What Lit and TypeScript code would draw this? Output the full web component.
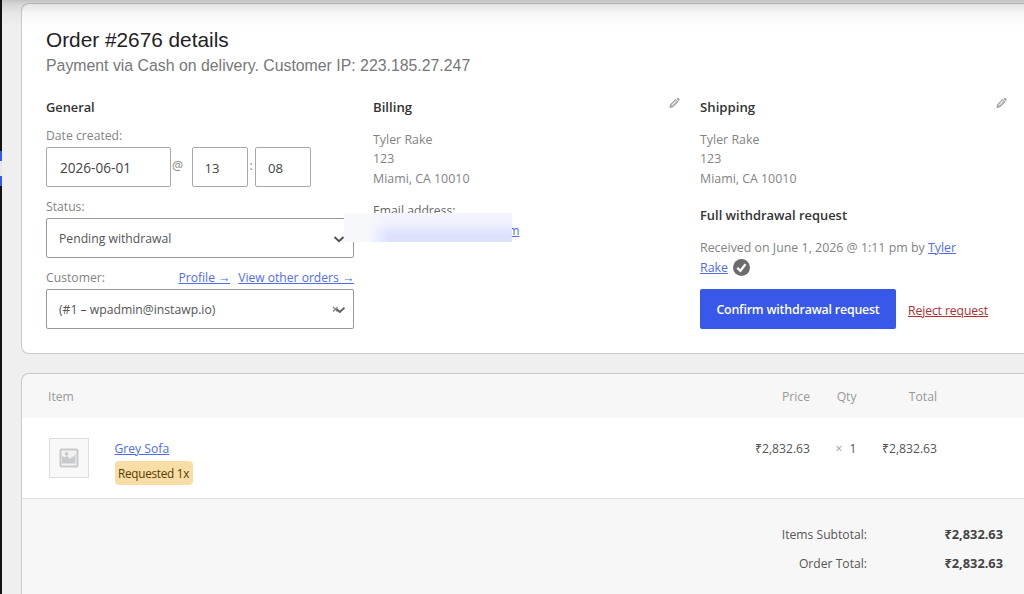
import { LitElement, html, css } from "lit";
import { customElement, property } from "lit/decorators.js";

const base = css`
  :host { display: block; }
  * { box-sizing: border-box; margin: 0; }
  a { color: #3858e9; opacity: .88; text-decoration: underline; text-underline-offset: 1px; text-decoration-thickness: 1px; }
  h3 { font-size: 13.2px; line-height: 20px; font-weight: 600; color: #333; }
`;

@customElement("address-block")
class AddressBlock extends LitElement {
  @property() heading = "";
  static styles = [base, css`
    .head { display: flex; justify-content: space-between; align-items: flex-start; height: 20px; }
    .pencil { width: 12px; height: 12px; }
    .lines { margin-top: 13px; font-size: 12.4px; line-height: 19.4px; color: #838383; }
  `];
  render() {
    return html`
      <div class="head"><h3>${this.heading}</h3>
        <svg class="pencil" viewBox="0 0 12 12">
          <path d="M.8 10.6 L1.6 7.3 L6.6 2.3 L9.1 4.8 L4.1 9.8 Z" fill="#b4b4b4" stroke="#969696" stroke-width=".8"/>
          <path d="M7.4 1.6 Q8.8 .3 10.2 1.5 Q11.4 2.8 9.9 4.1 Z" fill="#999"/>
          <path d="M2.9 8.2 L7.2 3.9" stroke="#f2f2f2" stroke-width="1.1"/>
        </svg>
      </div>
      <div class="lines">Tyler Rake<br>123<br>Miami, CA 10010</div>`;
  }
}

@customElement("order-items")
class OrderItems extends LitElement {
  static styles = [base, css`
    :host { font-size: 12.15px; color: #555; }
    .row { display: grid; grid-template-columns: 66.5px 1fr 100px 46.5px 80.5px 87px; padding-left: 26px; }
    .head { height: 44px; line-height: 46px; color: #999; }
    .head .first { grid-column: 1 / 3; }
    .num { text-align: right; }
    .body { background: #fff; height: 81px; padding-top: 20px; border-bottom: 1px solid #dedede; line-height: 21px; }
    .thumb { width: 40px; height: 40px; margin-left: .5px; border: 1px solid #dfdfdf; background: #f8f8f8; display: grid; place-items: center; }
    .thumb svg { width: 20px; height: 20px; }
    .badge { display: block; width: 78px; height: 24px; line-height: 25px; margin-top: 2px; border-radius: 4px; background: #f8dda7; color: #573b00; text-align: center; font-size: 11.8px; letter-spacing: -.3px; white-space: nowrap; }
    .x { color: #999; font-size: 12px; margin-right: 4px; }
    .totals { padding: 21px 21px 0 0; }
    .total { display: grid; grid-template-columns: 1fr 136px; text-align: right; line-height: 29px; }
    .total b { font-weight: 700; color: #444; font-size: 12.8px; }
  `];
  render() {
    return html`
      <div class="row head"><span class="first">Item</span><span class="num">Price</span><span class="num">Qty</span><span class="num">Total</span></div>
      <div class="row body">
        <div class="thumb"><svg viewBox="0 0 20 20">
          <rect x="1.5" y="1.5" width="17" height="17" rx="1" fill="#f2f2f2" stroke="#c9cacc" stroke-width="2"/>
          <path d="M3 14 V7.5 L5 9.5 L8 8 L11 11 L13 8.5 L15 9 L16.5 5 V15.5 H3 Z" fill="#c9cacc"/>
          <circle cx="7.6" cy="5.8" r="1.9" fill="#c9cacc"/>
        </svg></div>
        <div><a>Grey Sofa</a><span class="badge">Requested 1x</span></div>
        <span class="num">₹2,832.63</span><span class="num"><span class="x">×</span> 1</span><span class="num">₹2,832.63</span>
      </div>
      <div class="totals">
        <div class="total"><span>Items Subtotal:</span><b>₹2,832.63</b></div>
        <div class="total"><span>Order Total:</span><b>₹2,832.63</b></div>
      </div>`;
  }
}

@customElement("app-root")
class AppRoot extends LitElement {
  static styles = [base, css`
    :host { position: relative; height: 594px; overflow: hidden; background: #efefef; font-family: "Open Sans", "Noto Sans", sans-serif; font-size: 12.4px; color: #838383; }
    .page { display: flex; height: 594px; }
    .rail { width: 2px; background: #121212; display: flex; flex-direction: column; padding-top: 151px; flex: none; }
    .rail i { height: 10px; background: #3858e9; }
    .rail .gap { height: 15px; background: #e6e6ec; }
    .main { width: 1022px; flex: none; padding: 3px 0 0 19px; }
    .panel { border: 1px solid #c9cacc; border-right: 0; border-radius: 8px 0 0 8px; background: #fff; overflow: hidden; }
    .order { height: 351px; padding: 23px 0 0 24px; }
    .items { height: 240px; margin-top: 19px; background: #f7f7f7; }
    h2 { font: 400 20.8px/26px "Liberation Sans", Arial, sans-serif; color: #1f2125; }
    .sub { font: 400 15.85px/26px "Liberation Sans", Arial, sans-serif; color: #777; }
    .cols { display: grid; grid-template-columns: 327px 327px 327px; margin-top: 18px; }
    .cols > * { width: 308px; }
    .general { font-size: 12.8px; }
    .lab { display: flex; line-height: 18px; height: 18px; white-space: nowrap; margin-top: 11px; font-size: 12.2px; }
    .lab.first { margin-top: 10px; }
    .lab a { margin-left: 8px; font-size: 12.1px; }
    .lab .push { margin-left: auto; }
    .date { display: flex; margin-top: 2px; height: 40px; }
    .field { height: 40px; border: 1px solid #949a9f; border-radius: 2px; background: #fff; color: #444; display: flex; align-items: center; padding-left: 13px; font-size: 13.6px; }
    .date .field { border-color: #a8a8a8; padding-top: 1px; }
    .d { width: 125px; }
    .t { width: 56px; }
    .date .t { font-size: 13.2px; padding-left: 12px; }
    .at { width: 20.5px; padding-left: 1px; line-height: 37px; }
    .colon { width: 7.5px; text-align: center; line-height: 37px; }
    .select { margin-top: 2px; justify-content: space-between; padding-left: 12px; padding-right: 7px; font-size: 12.2px; color: #555; }
    .select svg { height: 10px; width: 14px; margin-top: 2px; }
    .email { position: relative; margin-top: 13px; line-height: 19.4px; color: #666; font-size: 12.2px; }
    .mail { display: block; padding-left: 0; width: 146.5px; text-align: right; }
    .blur { position: absolute; left: -29px; top: 12px; width: 168px; height: 29px; background: linear-gradient(to right, #f7f8fc 0, #f7f8fc 14%, transparent 27%), linear-gradient(#f5f6fc 0, #eff1fc 35%, #dce2fc 75%, #dce2fc 100%); }
    .wd { margin-top: 17px; font-size: 12.9px; }
    .recv { line-height: 19.4px; margin-top: 13px; }
    .tick { width: 17px; height: 17px; vertical-align: -4px; margin-left: 2px; }
    .acts { display: flex; align-items: center; margin-top: 12px; }
    button { width: 196px; height: 40px; background: #3858e9; color: #fff; border: 0; border-radius: 2px; font: 600 12.4px "Open Sans", sans-serif; letter-spacing: -.2px; padding: 0; white-space: nowrap; }
    .reject { color: #b32d2e; margin-left: 12px; opacity: 1; white-space: nowrap; padding-top: 2px; font-size: 12.2px; letter-spacing: -.1px; }
    .shade { position: absolute; left: 2px; right: 0; top: 0; height: 26px; background: linear-gradient(rgba(20,22,30,.2), rgba(20,22,30,.12) 15%, rgba(20,22,30,.04) 50%, transparent); }
  `];
  render() {
    return html`
      <div class="page">
        <div class="rail"><i></i><i class="gap"></i><i></i></div>
        <div class="main">
          <section class="panel order">
            <h2>Order #2676 details</h2>
            <p class="sub">Payment via Cash on delivery. Customer IP: 223.185.27.247</p>
            <div class="cols">
              <div>
                <h3 class="general">General</h3>
                <div class="lab first">Date created:</div>
                <div class="date"><div class="field d">2026-06-01</div><span class="at">@</span><div class="field t">13</div><span class="colon">:</span><div class="field t">08</div></div>
                <div class="lab">Status:</div>
                <div class="field select">Pending withdrawal
                  <svg viewBox="0 0 14 10"><path d="M2.5 3 L7 7.2 L11.5 3" fill="none" stroke="#505050" stroke-width="1.9"/></svg></div>
                <div class="lab">Customer:<a class="push">Profile →</a><a>View other orders →</a></div>
                <div class="field select">(#1 – wpadmin@instawp.io)
                  <svg viewBox="0 0 14 10"><path d="M1 2 L5.5 6.5 M5.5 2 L1 6.5" stroke="#888" stroke-width="1.3"/><path d="M4.5 4 L7.8 7 L12.5 2.6" fill="none" stroke="#606060" stroke-width="1.9"/></svg></div>
              </div>
              <div>
                <address-block heading="Billing"></address-block>
                <div class="email">Email address:<a class="mail">m</a><div class="blur"></div></div>
              </div>
              <div>
                <address-block heading="Shipping"></address-block>
                <h3 class="wd">Full withdrawal request</h3>
                <p class="recv">Received on June 1, 2026 @ 1:11 pm by <a>Tyler<br>Rake</a>
                  <svg class="tick" viewBox="0 0 16 16"><circle cx="8" cy="8" r="8" fill="#6c6c6c"/><path d="M4 8.3 L7 11.1 L11.8 4.8" fill="none" stroke="#fff" stroke-width="2.2"/></svg></p>
                <div class="acts"><button>Confirm withdrawal request</button><a class="reject">Reject request</a></div>
              </div>
            </div>
          </section>
          <section class="panel items"><order-items></order-items></section>
        </div>
      </div>
      <div class="shade"></div>`;
  }
}
